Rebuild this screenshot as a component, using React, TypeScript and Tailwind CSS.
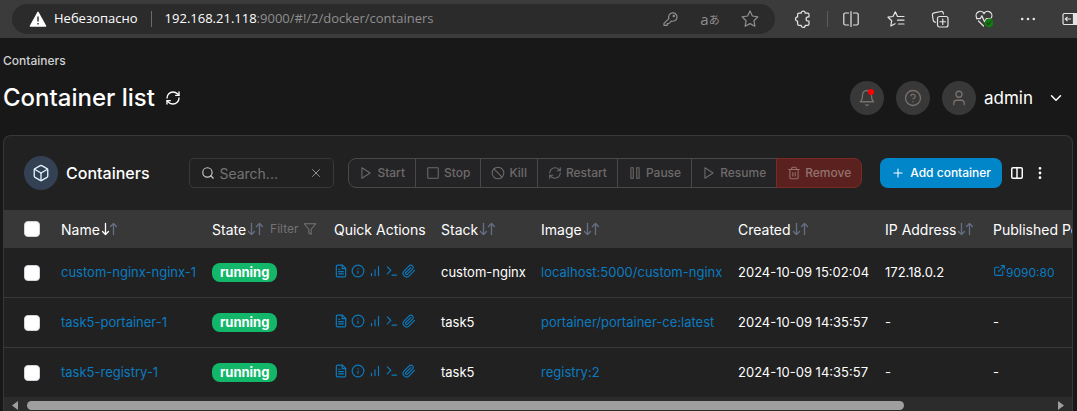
import type { ReactNode } from "react";
import {
  Box,
  ChevronDown,
  Columns2,
  EllipsisVertical,
  Plus,
  RefreshCw,
  Search,
  User,
  X,
} from "lucide-react";

function Glyph({ className = "size-4", width = 2, children }: { className?: string; width?: number; children: ReactNode }) {
  return (
    <svg
      viewBox="0 0 24 24"
      fill="none"
      stroke="currentColor"
      strokeWidth={width}
      strokeLinecap="round"
      strokeLinejoin="round"
      className={`shrink-0 ${className}`}
      aria-hidden="true"
    >
      {children}
    </svg>
  );
}

const play = <polygon points="5 3 19 12 5 21 5 3" />;

const actions = [
  { label: "Start", icon: play },
  { label: "Stop", icon: <rect x="3" y="3" width="18" height="18" rx="1" /> },
  {
    label: "Kill",
    icon: (
      <>
        <circle cx="12" cy="12" r="10" />
        <path d="m4.9 4.9 14.2 14.2" />
      </>
    ),
  },
  {
    label: "Restart",
    icon: (
      <>
        <path d="M3 12a9 9 0 0 1 9-9 9.75 9.75 0 0 1 6.74 2.74L21 8" />
        <path d="M21 3v5h-5" />
        <path d="M21 12a9 9 0 0 1-9 9 9.75 9.75 0 0 1-6.74-2.74L3 16" />
        <path d="M8 16H3v5" />
      </>
    ),
  },
  {
    label: "Pause",
    icon: (
      <>
        <rect x="5" y="3" width="4" height="18" />
        <rect x="15" y="3" width="4" height="18" />
      </>
    ),
  },
  { label: "Resume", icon: play },
];

const quickActions = [
  {
    label: "Logs",
    icon: (
      <>
        <path d="M14.5 2H6a2 2 0 0 0-2 2v16a2 2 0 0 0 2 2h12a2 2 0 0 0 2-2V7.5L14.5 2z" />
        <path d="M14 2v6h6M16 13H8M16 17H8M10 9H8" />
      </>
    ),
  },
  {
    label: "Inspect",
    icon: (
      <>
        <circle cx="12" cy="12" r="10" />
        <path d="M12 16v-4M12 8h.01" />
      </>
    ),
  },
  { label: "Stats", icon: <path d="M18 20V4M12 20V10M6 20v-4" /> },
  { label: "Exec Console", icon: <path d="m4 17 6-6-6-6M12 19h8" /> },
  {
    label: "Attach Console",
    icon: <path d="m21.44 11.05-9.19 9.19a6 6 0 0 1-8.49-8.49l8.57-8.57A4 4 0 1 1 18 8.84l-8.59 8.57a2 2 0 0 1-2.83-2.83l8.49-8.48" />,
  },
];

const containers = [
  { name: "custom-nginx-nginx-1", stack: "custom-nginx", image: "localhost:5000/custom-nginx", created: "2024-10-09 15:02:04", ip: "172.18.0.2", port: "9090:80" },
  { name: "task5-portainer-1", stack: "task5", image: "portainer/portainer-ce:latest", created: "2024-10-09 14:35:57", ip: "-", port: "" },
  { name: "task5-registry-1", stack: "task5", image: "registry:2", created: "2024-10-09 14:35:57", ip: "-", port: "" },
];

function ToolButton({ label, children, className = "w-11" }: { label: string; children: ReactNode; className?: string }) {
  return (
    <button type="button" aria-label={label} className={`flex h-8 shrink-0 items-center justify-center ${className}`}>
      <svg viewBox="0 0 20 20" fill="none" stroke="currentColor" strokeWidth="1.2" strokeLinejoin="round" strokeLinecap="round" className="size-5">
        {children}
      </svg>
    </button>
  );
}

function BrowserBar() {
  return (
    <div className="flex h-[38px] items-center overflow-hidden bg-[#3b3b3b] pl-3 text-[#e4e4e4]">
      <div className="flex h-[30px] min-w-0 flex-1 items-center rounded-full bg-[#2b2b2b] pl-[17px] pr-[5px] font-['Open_Sans','Noto_Sans',sans-serif] text-[13px]">
        <svg viewBox="0 0 18 16" className="h-4 w-[18px] shrink-0" aria-hidden="true">
          <path d="M9 1.3 16.6 15H1.4z" fill="#fff" stroke="#fff" strokeWidth="1.4" strokeLinejoin="round" />
          <path d="M9 5.5v5M9 12v1.6" stroke="#2b2b2b" strokeWidth="1.4" />
        </svg>
        <span className="ml-[7px] text-white">Небезопасно</span>
        <span className="mx-[13px] h-4 w-px bg-[#6b6b6b]" />
        <span className="min-w-0 flex-1 truncate text-[#8f8f8f]">
          <span className="text-white">192.168.21.118</span>:9000/#!/2/docker/containers
        </span>
        <div className="flex text-[#8f8f8f]">
          <ToolButton label="Passwords" className="w-10">
            <path d="M8.9 9.6A4.2 4.2 0 1 1 11.4 12l-1.3 1.4-1.3 1.2H7.2v1.8H4v-2z" />
            <circle cx="13.8" cy="7" r=".6" />
          </ToolButton>
          <button type="button" className="flex h-8 w-10 items-center justify-center font-['Open_Sans','Noto_Sans_CJK_JP',sans-serif] text-[15px] leading-none">
            a<span className="text-[11px]">あ</span>
          </button>
          <ToolButton label="Add to favorites" className="w-10">
            <path d="M10 2l2.4 5 5.5.8-4 3.9 1 5.5-4.9-2.6-4.9 2.6 1-5.5-4-3.9 5.5-.8z" />
          </ToolButton>
        </div>
      </div>
      <div className="flex items-center pl-1.5">
        <ToolButton label="Extensions">
          <path d="M6 4.2h2.2a2 2 0 0 1 4 0h2.4a1.4 1.4 0 0 1 1.4 1.4v2.2h-.8a2 2 0 0 0 0 4.2h.8v3a1.4 1.4 0 0 1-1.4 1.4h-2.4a2 2 0 0 1-4 0H6A1.4 1.4 0 0 1 4.6 15v-2.9a2 2 0 0 1 0-4.2V5.6A1.4 1.4 0 0 1 6 4.2z" />
        </ToolButton>
        <span className="ml-0.5 h-4 w-px bg-[#5c5c5c]" />
        <ToolButton label="Split screen" className="w-[46px]">
          <path d="M7.5 4H4.3a1.5 1.5 0 0 0-1.5 1.5v9A1.5 1.5 0 0 0 4.3 16h3.2M12.5 4h3.2a1.5 1.5 0 0 1 1.5 1.5v9a1.5 1.5 0 0 1-1.5 1.5h-3.2M10 2.5v15" />
        </ToolButton>
        <ToolButton label="Favorites">
          <path d="M12.5 7.5h-1L9.3 2.8 7 7.5l-5 .7 3.7 3.6-.9 5.2 4.2-2.3M12.5 7.5h5.5M11.5 11.2H18M12.5 15H18" />
        </ToolButton>
        <ToolButton label="Collections">
          <rect x="7.5" y="7.5" width="10.5" height="10.5" rx="2" />
          <path d="M12.75 10v5.5M10 12.75h5.5M5.5 13.3l-1-.4a2 2 0 0 1-1.3-1.9l-.8-5a2 2 0 0 1 1.6-2.2L11 2.5a2 2 0 0 1 2.3 1.6l.1.9" />
        </ToolButton>
        <ToolButton label="Browser essentials">
          <path d="M2.6 8.6a4.2 4.2 0 0 1 7.4-4 4.2 4.2 0 0 1 7.4 4M4.5 12l5 5M2.5 9.7h3.8l1.6-3 2.6 6 1.7-3h4" />
          <circle cx="15" cy="14" r="4.4" fill="#107c10" stroke="none" />
          <path d="M13 14.2l1.3 1.3 2.6-2.8" stroke="#25451f" />
        </ToolButton>
        <ToolButton label="Settings and more">
          <g fill="currentColor" stroke="none">
            <circle cx="4.2" cy="10" r="1.3" />
            <circle cx="10" cy="10" r="1.3" />
            <circle cx="15.8" cy="10" r="1.3" />
          </g>
        </ToolButton>
        <div className="flex w-[27px] justify-end overflow-hidden">
          <svg viewBox="0 0 15 14" fill="none" stroke="currentColor" strokeWidth="1.2" className="h-3.5 w-[15px] shrink-0" aria-hidden="true">
            <path d="M15 1.5H2.5A1.5 1.5 0 0 0 1 3v8a1.5 1.5 0 0 0 1.5 1.5H15M9 7H3.5M5.5 4.8 3.3 7l2.2 2.2" />
            <path d="M11.5 1.5H15v11h-3.5z" fill="currentColor" />
          </svg>
        </div>
      </div>
    </div>
  );
}

function RoundButton({ label, children }: { label: string; children: ReactNode }) {
  return (
    <button type="button" aria-label={label} className="relative flex size-[34px] items-center justify-center rounded-full bg-[#383838] text-[#78716c]">
      {children}
    </button>
  );
}

function SortArrows({ active = false }: { active?: boolean }) {
  return (
    <svg
      viewBox="0 0 18 14"
      fill="none"
      strokeWidth="1.3"
      strokeLinecap="round"
      strokeLinejoin="round"
      className="h-3.5 w-[18px] shrink-0"
      aria-hidden="true"
    >
      <path d="M5.5 1.5v11M2.5 9.5l3 3 3-3" stroke={active ? "#fff" : "#667085"} />
      <path d="M13.5 12.5v-11M10.5 4.5l3-3 3 3" stroke="#667085" />
    </svg>
  );
}

function SortHeader({ label, active }: { label: string; active?: boolean }) {
  return (
    <button type="button" className="flex items-center">
      {label}
      <SortArrows active={active} />
    </button>
  );
}

function Tick({ label }: { label: string }) {
  return <input type="checkbox" aria-label={label} className="block size-4 appearance-none rounded border border-[#d0d5dd] bg-white" />;
}

export default function App() {
  return (
    <div className="min-h-screen overflow-hidden bg-[#181818] font-['Inter',sans-serif] text-white">
      <BrowserBar />
      <header className="pl-[3px] pr-3 pt-3.5">
        <nav className="text-[12px] leading-[18px] font-medium">
          <a href="#containers" className="text-[#d0d0d0]">Containers</a>
        </nav>
        <div className="mt-[11px] flex h-[34px] items-center">
          <h1 className="text-[24px] leading-8 font-medium">Container list</h1>
          <button type="button" aria-label="Refresh" className="ml-2.5">
            <RefreshCw className="size-4" strokeWidth={2} />
          </button>
          <div className="ml-auto flex items-center gap-3">
            <RoundButton label="Notifications">
              <Glyph className="size-[18px]" width={1.7}>
                <path d="M6 8a6 6 0 0 1 12 0c0 7 3 9 3 9H3s3-2 3-9" />
                <path d="M10.3 21a1.94 1.94 0 0 0 3.4 0" />
              </Glyph>
              <span className="absolute right-2.5 top-2 size-1.5 rounded-full bg-[#f00]" />
            </RoundButton>
            <RoundButton label="Help">
              <Glyph className="size-[18px]" width={1.7}>
                <circle cx="12" cy="12" r="10" />
                <path d="M9.09 9a3 3 0 0 1 5.83 1c0 2-3 3-3 3M12 17h.01" />
              </Glyph>
            </RoundButton>
            <button type="button" className="flex items-center gap-2">
              <span className="flex size-[34px] items-center justify-center rounded-full bg-[#383838] text-[#78716c]">
                <User className="size-[18px]" strokeWidth={1.7} />
              </span>
              <span className="text-[17px] leading-7">admin</span>
              <ChevronDown className="ml-1.5 size-[18px]" strokeWidth={2} />
            </button>
          </div>
        </div>
      </header>

      <section className="ml-[3px] mr-1 mt-5 overflow-hidden rounded-t-lg border border-b-0 border-[#383838] bg-[#212121]">
        <div className="flex h-[74px] items-center pl-5 pr-6">
          <div className="flex size-[34px] shrink-0 items-center justify-center rounded-full bg-[#344054] text-[#e0f2fe]">
            <Box className="size-[18px]" strokeWidth={1.8} />
          </div>
          <h2 className="ml-2 text-[16px] leading-6 font-medium">Containers</h2>
          <div className="ml-auto flex h-[30px] w-[145px] items-center rounded-[5px] border border-[#383838] pl-[11px] pr-2.5">
            <Search className="size-3.5 shrink-0 text-[#c8c8c8]" />
            <input aria-label="Search" placeholder="Search..." className="ml-1 min-w-0 flex-1 bg-transparent text-[14px] outline-none placeholder:text-[#737373]" />
            <button type="button" aria-label="Clear search">
              <X className="size-3.5 text-[#a0a0a0]" strokeWidth={1.5} />
            </button>
          </div>
          <div className="ml-3.5 flex h-[30px] text-[12px] font-medium">
            {actions.map((a) => (
              <button
                key={a.label}
                type="button"
                className="-mr-px flex items-center gap-1 border border-[#4a4848] bg-[#242426] px-2.5 text-[#6e6a69] first:rounded-l-lg"
              >
                <Glyph className="size-3.5" width={1.8}>{a.icon}</Glyph>
                {a.label}
              </button>
            ))}
            <button type="button" className="flex items-center gap-1 rounded-r-lg border border-[#7a2a25] bg-[#5b211e] px-2.5 text-[#93726f]">
              <Glyph className="size-3.5" width={1.8}>
                <path d="M3 6h18M19 6v14a2 2 0 0 1-2 2H7a2 2 0 0 1-2-2V6M8 6V4a2 2 0 0 1 2-2h4a2 2 0 0 1 2 2v2M10 11v6M14 11v6" />
              </Glyph>
              Remove
            </button>
          </div>
          <button type="button" className="ml-[18px] flex h-[30px] items-center gap-[5px] rounded-lg bg-[#0086c9] px-[11px] text-[12px] font-medium whitespace-nowrap">
            <Plus className="size-3.5" strokeWidth={1.8} />
            Add container
          </button>
          <button type="button" aria-label="Columns" className="ml-2">
            <Columns2 className="size-3.5" strokeWidth={2.5} />
          </button>
          <button type="button" aria-label="Table settings" className="ml-2">
            <EllipsisVertical className="size-4" strokeWidth={2.2} />
          </button>
        </div>

        <div className="overflow-hidden">
          <table className="w-[1248px] table-fixed border-separate border-spacing-0 text-left text-[13px] whitespace-nowrap">
            <colgroup>
              <col className="w-[49px]" />
              <col className="w-[151px]" />
              <col className="w-[122px]" />
              <col className="w-[107px]" />
              <col className="w-[100px]" />
              <col className="w-[197px]" />
              <col className="w-[147px]" />
              <col className="w-[108px]" />
              <col />
            </colgroup>
            <thead className="bg-[#383838] text-[14px]">
              <tr className="h-[38px] [&>th]:px-2 [&>th]:font-normal">
                <th className="pl-5!"><Tick label="Select all" /></th>
                <th><SortHeader label="Name" active /></th>
                <th>
                  <div className="flex items-center">
                    <SortHeader label="State" />
                    <button type="button" className="ml-1.5 flex items-center gap-1 text-[12px] text-[#737373]">
                      Filter
                      <Glyph className="size-3.5" width={1.8}>
                        <polygon points="22 3 2 3 10 12.46 10 19 14 21 14 12.46 22 3" />
                      </Glyph>
                    </button>
                  </div>
                </th>
                <th>Quick Actions</th>
                <th><SortHeader label="Stack" /></th>
                <th><SortHeader label="Image" /></th>
                <th><SortHeader label="Created" /></th>
                <th><SortHeader label="IP Address" /></th>
                <th>Published Ports</th>
              </tr>
            </thead>
            <tbody>
              {containers.map((c) => (
                <tr key={c.name} className="h-[50px] [&>td]:border-b [&>td]:border-[#383838] [&>td]:px-2 last:[&>td]:border-[#2c2c2c]">
                  <td className="pl-5!"><Tick label={`Select ${c.name}`} /></td>
                  <td><a href="#container" className="text-[#0b7bc0]">{c.name}</a></td>
                  <td><span className="inline-block rounded-lg bg-[#12b76a] px-2 leading-[19px] font-bold">running</span></td>
                  <td>
                    <div className="flex gap-[3px] pb-1 text-[#0b7bc0]">
                      {quickActions.map((q) => (
                        <a key={q.label} href="#action" aria-label={q.label}>
                          <Glyph className="size-3.5" width={2}>{q.icon}</Glyph>
                        </a>
                      ))}
                    </div>
                  </td>
                  <td>{c.stack}</td>
                  <td><a href="#image" className="text-[#0b7bc0]">{c.image}</a></td>
                  <td>{c.created}</td>
                  <td>{c.ip}</td>
                  <td>
                    {c.port ? (
                      <a href="#port" className="flex items-center text-[12px] text-[#0b7bc0]">
                        <Glyph className="mb-1 size-[13px]" width={2}>
                          <path d="M18 13v6a2 2 0 0 1-2 2H5a2 2 0 0 1-2-2V8a2 2 0 0 1 2-2h6M15 3h6v6M10 14 21 3" />
                        </Glyph>
                        {c.port}
                      </a>
                    ) : (
                      "-"
                    )}
                  </td>
                </tr>
              ))}
            </tbody>
          </table>
        </div>
        <div className="flex h-[15px] items-center bg-[#2c2c2c] px-2 text-[#9f9f9f]">
          <svg viewBox="0 0 6 9" className="h-[9px] w-1.5" fill="currentColor" aria-hidden="true"><path d="M6 0v9L0 4.5z" /></svg>
          <div className="ml-[9px] mr-2 flex-1">
            <div className="h-[9px] w-6/7 rounded-full bg-[#9f9f9f]" />
          </div>
          <svg viewBox="0 0 6 9" className="h-[9px] w-1.5" fill="currentColor" aria-hidden="true"><path d="M0 0v9l6-4.5z" /></svg>
        </div>
      </section>
    </div>
  );
}
